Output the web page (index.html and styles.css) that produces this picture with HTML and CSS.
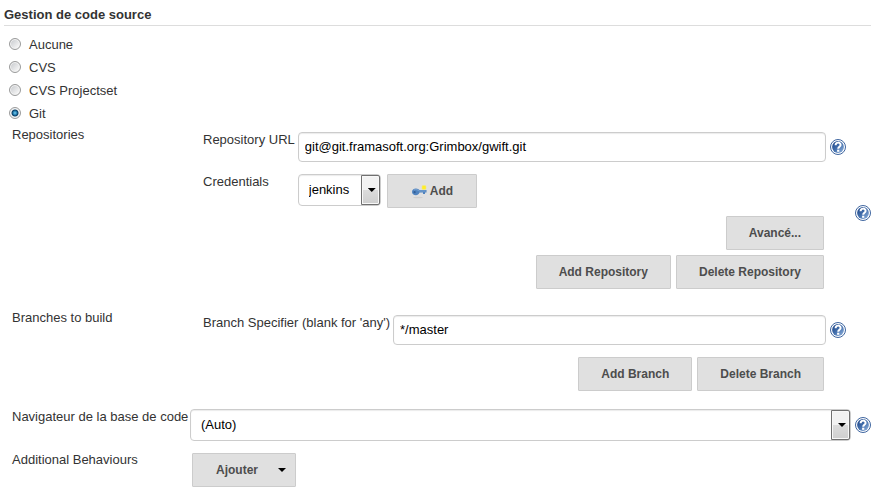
FILE: index.html
```html
<!DOCTYPE html>
<html lang="fr">
<head>
<meta charset="utf-8">
<title>Gestion de code source</title>
<link rel="stylesheet" href="styles.css">
</head>
<body>
<svg class="defs" aria-hidden="true">
  <defs>
    <linearGradient id="help-fill" x1="0" y1="0" x2="1" y2="1">
      <stop offset="0.1" stop-color="#1f488c"/>
      <stop offset="0.5" stop-color="#4470ad"/>
      <stop offset="0.9" stop-color="#86a9d6"/>
    </linearGradient>
    <symbol id="help" viewBox="0 0 16 16">
      <circle cx="8" cy="8" r="7.5" fill="#fff" stroke="#3e659f" stroke-width="1"/>
      <circle cx="8" cy="8" r="5.9" fill="url(#help-fill)"/>
      <path d="M5.6 6.3C5.6 2.8 10.6 2.8 10.6 5.9C10.6 7.8 8.2 7.8 8.2 9.8" fill="none" stroke="#fff" stroke-width="2"/>
      <rect x="7.1" y="10.7" width="2.2" height="2.1" fill="#fff"/>
    </symbol>
  </defs>
</svg>
<form class="page">
  <h1 class="title">Gestion de code source</h1>

  <div class="options">
    <label class="option"><input class="radio" type="radio" name="scm">Aucune</label>
    <label class="option"><input class="radio" type="radio" name="scm">CVS</label>
    <label class="option"><input class="radio" type="radio" name="scm">CVS Projectset</label>
    <label class="option"><input class="radio" type="radio" name="scm" checked>Git</label>
  </div>

  <div class="settings">
    <section class="setting">
      <h2 class="name">Repositories</h2>
      <div class="group">
        <div class="fields">
          <label class="label" for="url">Repository URL</label>
          <input class="text" id="url" type="text" value="git@git.framasoft.org:Grimbox/gwift.git">
          <a class="help" href="#" aria-label="Aide"><svg><use href="#help"/></svg></a>
          <label class="label" for="credentials">Credentials</label>
          <div class="inline">
            <span class="select short">
              <select id="credentials"><option>jenkins</option></select>
            </span>
            <button class="button add" type="button">
              <svg class="key" viewBox="0 0 16 16" aria-hidden="true">
                <ellipse cx="7" cy="14.5" rx="5" ry="0.7" fill="#cfcfcf"/>
                <path d="M5 5.5C6.7 5.5 7.7 6.3 8.4 7H15.5V9.6H14V11H12V9.6H8.6C7.7 11.4 6.5 12.2 5 12.2C2.5 12.2 1 10.8 1 8.9S2.5 5.5 5 5.5Z" fill="#5083bf"/>
                <path d="M3 7C5 6 7 7 8.4 8H14.8" fill="none" stroke="#7ba4d2"/>
                <circle cx="3.6" cy="9.2" r="1.1" fill="#315d96"/>
                <rect x="11" y="2.5" width="4" height="4" rx="1" fill="#ffee29" stroke="#f1e985" stroke-width="0.6"/>
              </svg>Add</button>
          </div>
        </div>
        <div class="actions first"><button class="button" type="button">Avancé...</button></div>
        <div class="actions">
          <button class="button" type="button">Add Repository</button>
          <button class="button" type="button">Delete Repository</button>
        </div>
      </div>
      <a class="help" href="#" aria-label="Aide"><svg><use href="#help"/></svg></a>
    </section>

    <section class="setting">
      <h2 class="name">Branches to build</h2>
      <div class="group branches">
        <div class="fields">
          <label class="label" for="branch">Branch Specifier (blank for 'any')</label>
          <input class="text" id="branch" type="text" value="*/master">
          <a class="help" href="#" aria-label="Aide"><svg><use href="#help"/></svg></a>
        </div>
        <div class="actions branch">
          <button class="button" type="button">Add Branch</button>
          <button class="button" type="button">Delete Branch</button>
        </div>
      </div>
    </section>

    <div class="setting">
      <label class="name" for="browser">Navigateur de la base de code</label>
      <span class="select">
        <select id="browser"><option>(Auto)</option></select>
      </span>
      <a class="help" href="#" aria-label="Aide"><svg><use href="#help"/></svg></a>
    </div>

    <div class="setting">
      <h2 class="name">Additional Behaviours</h2>
      <div class="behaviours"><button class="button menu" type="button">Ajouter</button></div>
    </div>
  </div>
</form>
</body>
</html>
```
FILE: styles.css
```css
* { box-sizing: border-box; }

body {
  margin: 0;
  background: #fff;
  color: #333;
  font: 13px/16px "Liberation Sans", Arial, sans-serif;
}

input, select, button { font: inherit; margin: 0; }

.defs { position: absolute; width: 0; height: 0; }

.page { padding: 7px 10px 4px 4px; }

.title {
  margin: 0 0 7px;
  padding-bottom: 2px;
  border-bottom: 1px solid #ddd;
  font-size: 13px;
  font-weight: bold;
}

.option {
  display: flex;
  align-items: center;
  gap: 8px;
  height: 23px;
  padding: 0 5px;
}

.radio {
  appearance: none;
  width: 12px;
  height: 12px;
  margin-bottom: 2px;
  border: 1px solid #9a9b9b;
  border-radius: 50%;
  background: linear-gradient(135deg, #c3c6ca, #f4f4f4 80%);
  box-shadow: inset 0 0 0 1px #f4f4f4;
}

.radio:checked {
  background: radial-gradient(circle at 50% 50%, #7fd0ee 0, #1b77ad 2px, #0b3b60 3px, #e8eef2 4px);
}

.settings {
  display: flex;
  flex-direction: column;
  gap: 11px;
  padding: 2px 0 0 8px;
}

.setting {
  display: grid;
  grid-template-columns: 178px minmax(0, 1fr) 20px;
  align-items: center;
}

.name {
  align-self: start;
  margin: 0;
  font-size: 13px;
  font-weight: normal;
  line-height: 16px;
  white-space: nowrap;
}

.group { padding: 5px 5px 10px 13px; }
.branches { padding-bottom: 7px; }

.fields {
  display: grid;
  grid-template-columns: auto minmax(0, 1fr) 17px;
  gap: 12px 3px;
  align-items: center;
}

.label { align-self: start; white-space: nowrap; }

.text {
  width: 100%;
  height: 30px;
  padding: 0 6px 2px;
  border: 1px solid #ccc;
  border-radius: 4px;
  background: #fff;
  box-shadow: inset 0 1px 1px #ececec;
  color: #000;
}

.help { display: block; justify-self: end; width: 16px; height: 16px; }
.help svg { display: block; width: 16px; height: 16px; }

.inline { display: flex; align-items: flex-start; gap: 6px; }

.select { display: block; position: relative; }
.short { width: 83px; }

.select select {
  appearance: none;
  display: block;
  width: 100%;
  height: 32px;
  padding: 0 24px 0 10px;
  border: 1px solid #ccc;
  border-radius: 4px;
  background: #fff;
  box-shadow: inset 0 1px 1px #ececec;
  color: #000;
}

.select::before {
  content: "";
  position: absolute;
  top: 1px;
  right: 1px;
  bottom: 1px;
  width: 17px;
  border: 1px solid #707070;
  border-radius: 0 2px 2px 0;
  background: linear-gradient(#f2f2f2 50%, #dcdcdc 50%, #cfcfcf);
  box-shadow: inset 0 0 0 1px #f8f8f8;
  pointer-events: none;
}

.select::after, .menu::after {
  content: "";
  width: 8px;
  height: 4px;
  background: #000;
  clip-path: polygon(0 0, 100% 0, 50% 100%);
}

.select::after {
  position: absolute;
  top: 14px;
  right: 5px;
  pointer-events: none;
}

.button {
  display: inline-flex;
  align-items: center;
  height: 34px;
  padding: 0 22px;
  border: 1px solid #ccc;
  border-radius: 1px;
  background: #e0e0e0;
  color: #4d4d4d;
  font-size: 12px;
  font-weight: bold;
  white-space: nowrap;
}

.add { gap: 3px; padding: 0 23px; }
.key { width: 16px; height: 16px; }

.actions {
  display: flex;
  justify-content: flex-end;
  gap: 5px;
  margin: 5px 22px 0 0;
}

.first { margin-top: 8px; }
.branch { margin-top: 12px; }

.behaviours { padding: 1px 0 0 2px; }
.menu { gap: 20px; padding: 0 9px 0 23px; }
```
